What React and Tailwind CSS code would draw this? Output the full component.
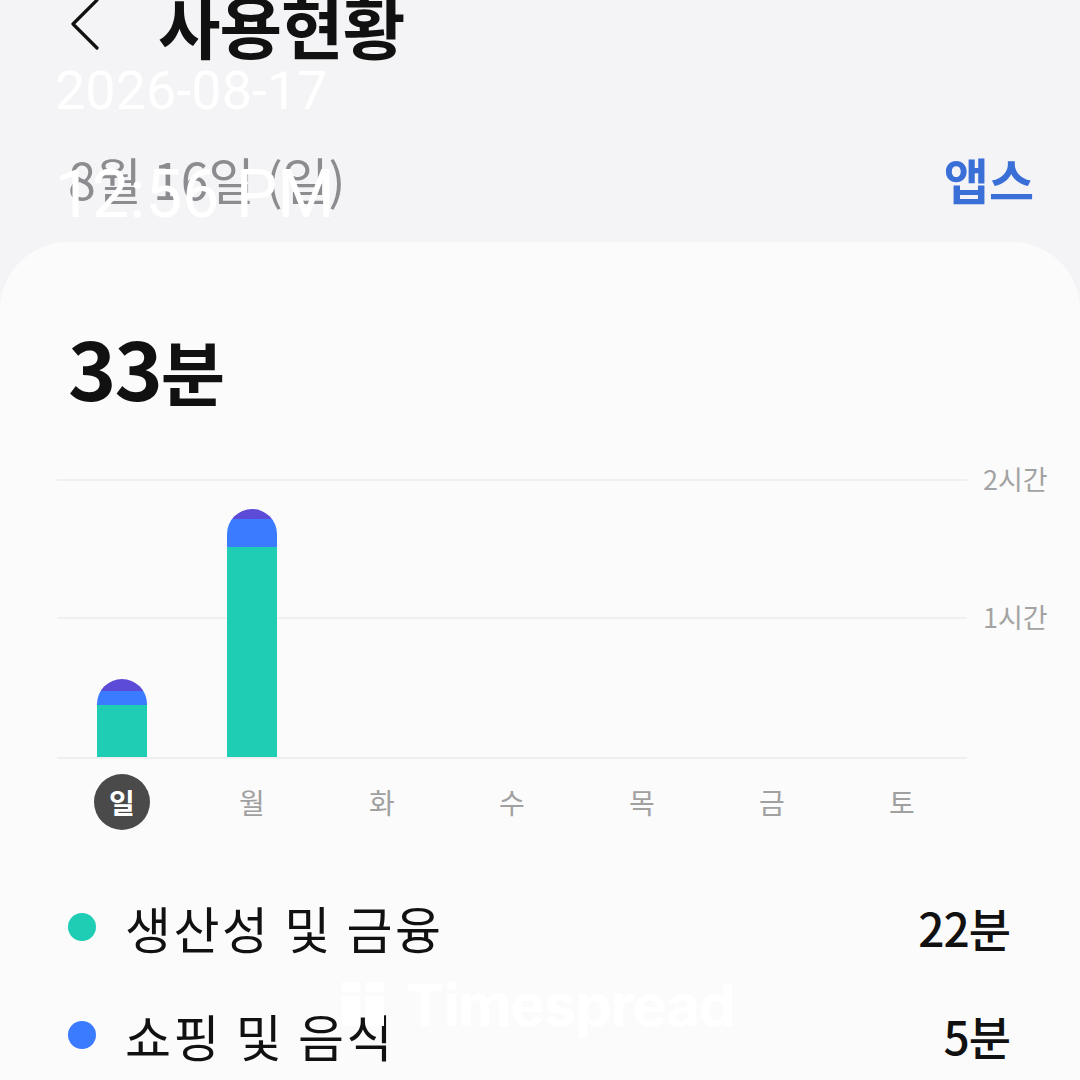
import React from "react";

const days = ["일", "월", "화", "수", "목", "금", "토"];

// per-day stacked bars, heights in px (purple cap, blue, teal)
const bars = [
  { purple: 12, blue: 14, teal: 52 },
  { purple: 10, blue: 28, teal: 210 },
  null,
  null,
  null,
  null,
  null,
];

const legend = [
  { color: "bg-[#1fcdb4]", label: "생산성 및 금융", value: "22분" },
  { color: "bg-[#3b7bff]", label: "쇼핑 및 음식", value: "5분" },
];

function Chevron() {
  return (
    <svg width="40" height="60" viewBox="0 0 40 60" fill="none">
      <path d="M27 4 L3 28 L27 52" stroke="#111" strokeWidth="3.2" strokeLinecap="round" strokeLinejoin="round" />
    </svg>
  );
}

export default function App() {
  return (
    <div
      className="relative w-[1080px] h-[1080px] overflow-hidden bg-[#f4f4f6] text-[#111]"
      style={{ fontFamily: '"Noto Sans CJK KR", "Noto Sans", sans-serif' }}
    >
      {/* header */}
      <div className="flex items-center h-[64px] mt-[-6px] pl-[70px]">
        <Chevron />
        <h1 className="ml-[48px] text-[68px] font-bold leading-none tracking-[-1px] mt-[-2px]">사용현황</h1>
      </div>

      <div className="flex items-center justify-between pl-[68px] pr-[46px] mt-[90px] h-[60px]">
        <span className="text-[50px] leading-none text-[#8b8b90] blur-[0.6px]">8월 16일 (일)</span>
        <span className="text-[49px] leading-none font-semibold text-[#3a6fd8]">앱스</span>
      </div>

      {/* card */}
      <div className="mt-[34px] h-[900px] bg-[#fbfbfb] rounded-t-[68px] pt-[83px]">
        <div className="pl-[68px] flex items-baseline">
          <span className="text-[82px] font-bold leading-none tracking-[-2px]">33</span>
          <span className="text-[70px] font-bold leading-none">분</span>
        </div>

        {/* chart */}
        <div className="mt-[72px] pl-[57px] flex">
          <div className="relative w-[910px] h-[280px]">
            <div className="absolute left-0 right-0 top-0 border-t-2 border-[#f0f0f0]" />
            <div className="absolute left-0 right-0 top-[138px] border-t-2 border-[#f0f0f0]" />
            <div className="absolute left-0 right-0 top-[278px] border-t-2 border-[#efefef]" />
            <div className="absolute left-0 right-0 top-0 h-[278px] grid grid-cols-7 items-end">
              {bars.map((b, i) => (
                <div key={i} className="flex justify-center">
                  {b && (
                    <div className="w-[50px] flex flex-col rounded-t-full overflow-hidden">
                      <div className="bg-[#5b4bd6]" style={{ height: b.purple }} />
                      <div className="bg-[#3b7bff]" style={{ height: b.blue }} />
                      <div className="bg-[#1fcdb4]" style={{ height: b.teal }} />
                    </div>
                  )}
                </div>
              ))}
            </div>
          </div>
          <div className="relative w-[100px] h-[280px] text-[27px] text-[#a3a3a3] leading-none">
            <span className="absolute left-[16px] top-[-14px]">2시간</span>
            <span className="absolute left-[16px] top-[124px]">1시간</span>
          </div>
        </div>

        <div className="mt-[15px] pl-[57px] w-[967px] grid grid-cols-7">
          {days.map((d, i) => (
            <div key={d} className="flex justify-center">
              {i === 0 ? (
                <div className="w-[56px] h-[56px] rounded-full bg-[#4a4a4a] flex items-center justify-center text-[28px] font-bold text-white">
                  {d}
                </div>
              ) : (
                <div className="h-[56px] flex items-center text-[28px] text-[#a0a0a0]">{d}</div>
              )}
            </div>
          ))}
        </div>

        {/* legend */}
        <div className="mt-[69px] pl-[68px] pr-[70px] flex flex-col gap-[52px]">
          {legend.map((l) => (
            <div key={l.label} className="flex items-center h-[56px]">
              <span className={`w-[28px] h-[28px] rounded-full ${l.color}`} />
              <span className="ml-[29px] text-[50px] leading-none tracking-[2.5px] text-[#111]">{l.label}</span>
              <span className="ml-auto text-[46px] leading-none font-medium tracking-[-1px] text-[#111]">{l.value}</span>
            </div>
          ))}
        </div>
      </div>

      {/* overlay watermarks */}
      <div
        className="absolute left-[55px] top-[64px] text-[54px] leading-none text-white/95"
        style={{ fontFamily: "Roboto, sans-serif" }}
      >
        2026-08-17
      </div>
      <div
        className="absolute left-[55px] top-[162px] text-[66px] leading-none text-white"
        style={{ fontFamily: "Roboto, sans-serif" }}
      >
        12:56 PM
      </div>
      <div className="absolute left-[342px] top-[976px] flex items-center gap-[22px] text-white">
        <div className="flex gap-[6px] h-[46px]">
          <div className="flex flex-col gap-[4px]">
            <span className="w-[18px] h-[10px] bg-white" />
            <span className="w-[18px] h-[30px] bg-white" />
          </div>
          <div className="flex flex-col gap-[4px]">
            <span className="w-[18px] h-[10px] bg-white" />
            <span className="w-[18px] h-[30px] bg-white" />
          </div>
        </div>
        <span className="text-[58px] font-bold leading-none tracking-[-1px]" style={{ fontFamily: "Inter, sans-serif" }}>
          Timespread
        </span>
      </div>
    </div>
  );
}
